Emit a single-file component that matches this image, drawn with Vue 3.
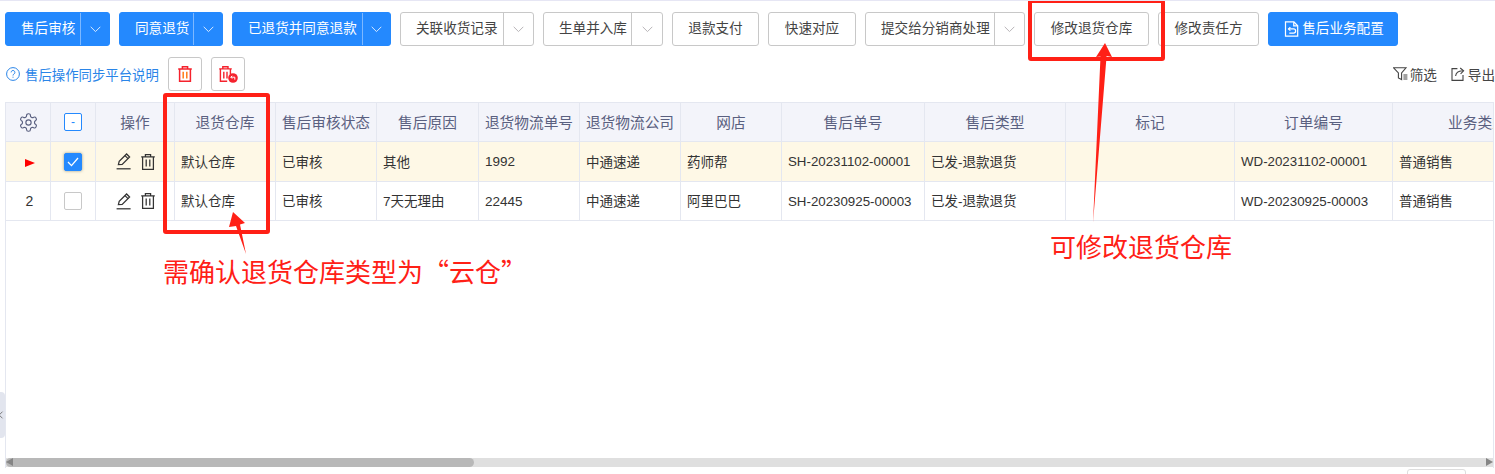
<script setup>
const buttons = [
  { label: '售后审核', w: 105, arrow: 28, primary: true },
  { label: '同意退货', w: 104, arrow: 28, primary: true },
  { label: '已退货并同意退款', w: 159, arrow: 27, primary: true },
  { label: '关联收货记录', w: 134, arrow: 29 },
  { label: '生单并入库', w: 120, arrow: 30 },
  { label: '退款支付', w: 87 },
  { label: '快速对应', w: 88 },
  { label: '提交给分销商处理', w: 160, arrow: 29 },
  { label: '修改退货仓库', w: 115 },
  { label: '修改责任方', w: 101 },
  { label: '售后业务配置', w: 130, primary: true, icon: true }
]
const cols = [
  { w: 45, t: '' }, { w: 45, t: '' }, { w: 79, t: '操作' },
  { w: 101, t: '退货仓库' }, { w: 101, t: '售后审核状态' }, { w: 102, t: '售后原因' },
  { w: 101, t: '退货物流单号' }, { w: 101, t: '退货物流公司' }, { w: 101, t: '网店' },
  { w: 143, t: '售后单号' }, { w: 141, t: '售后类型' }, { w: 169, t: '标记' },
  { w: 158, t: '订单编号' }, { w: 170, t: '业务类型' }
]
const rows = [
  { current: true, no: '', checked: true, cells: ['默认仓库', '已审核', '其他', '1992', '中通速递', '药师帮', 'SH-20231102-00001', '已发-退款退货', '', 'WD-20231102-00001', '普通销售'] },
  { current: false, no: '2', checked: false, cells: ['默认仓库', '已审核', '7天无理由', '22445', '中通速递', '阿里巴巴', 'SH-20230925-00003', '已发-退款退货', '', 'WD-20230925-00003', '普通销售'] }
]
const latinCols = [3, 6, 9]
const totalWidth = cols.reduce((s, c) => s + c.w, 0)
</script>

<template>
  <div class="page">
    <div class="toolbar">
      <div
        v-for="b in buttons"
        :key="b.label"
        class="btn"
        :class="{ primary: b.primary }"
        :style="{ width: b.w + 'px' }"
      >
        <span class="btn-main" :class="{ split: b.arrow, plain: !b.arrow }">
          <svg v-if="b.icon" class="cfg-icon" viewBox="0 0 16 17" fill="none" stroke="#fff" stroke-width="1.3">
            <path d="M1.6 1h9l4 4v11H1.6z" />
            <path d="M10.4 1.2v4h4" />
            <path d="M4.8 8.4h5.4a2.2 2.2 0 0 1 0 4.4H5.6" />
            <path d="M6.8 6.6 4.8 8.4l2 1.8" />
          </svg>
          {{ b.label }}
        </span>
        <span v-if="b.arrow" class="btn-arrow" :style="{ width: b.arrow + 'px' }">
          <svg width="11" height="7" viewBox="0 0 11 7" fill="none" stroke="currentColor" stroke-width="1">
            <path d="M.7.8 5.5 5.6 10.3.8" />
          </svg>
        </span>
      </div>
    </div>

    <div class="subbar">
      <div class="help">
        <svg class="help-icon" width="14" height="14" viewBox="0 0 14 14" fill="none" stroke="#2a85e8" stroke-width="1">
          <circle cx="7" cy="7" r="6.4" />
          <path d="M5.1 5.4a1.9 1.9 0 1 1 2.9 1.6c-.7.4-1 .8-1 1.5" />
          <path d="M7 9.7v1" />
        </svg>
        <span>售后操作同步平台说明</span>
      </div>
      <div class="icon-btn">
        <svg width="14" height="16" viewBox="0 0 14 16" fill="none" stroke="#f5222d" stroke-width="1.5">
          <path d="M.2 2.9h13.6M4.4 2.8V.8h5.2v2" />
          <path d="M1.6 3v12.2h10.8V3" />
          <path d="M5.2 5.8v6.8M8.8 5.8v6.8" stroke="#ff7a1a" />
        </svg>
      </div>
      <div class="icon-btn">
        <svg width="19" height="17" viewBox="0 0 19 17" fill="none" stroke="#f5222d" stroke-width="1.4">
          <path d="M.2 2.9h12.6M3.8 2.8V.8h5.2v2" />
          <path d="M1.4 3v12.2h6.8M11.4 3v5" />
          <path d="M4.8 5.8v6.8M8 5.8v6.8" />
          <circle cx="14" cy="12" r="4.8" fill="#f5222d" stroke="none" />
          <path d="M11.8 11.2h4v2.4M13.2 9.8l-1.4 1.4 1.4 1.4" stroke="#fff" stroke-width="1" />
        </svg>
      </div>
      <div class="tools">
        <span class="tool">
          <svg class="tool-icon" width="15" height="14" viewBox="0 0 15 14" fill="none" stroke="#444" stroke-width="1.1">
            <path d="M.6.8h12.4L8.6 6v6.6L5.4 11V6z" />
            <path d="M10.4 8h4M10.4 10h4M10.4 12h4" />
          </svg>
          筛选
        </span>
        <span class="tool">
          <svg class="tool-icon" width="15" height="14" viewBox="0 0 15 14" fill="none" stroke="#444" stroke-width="1.1">
            <path d="M6.4 1.6H1v11.8h11V8" />
            <path d="M4.6 9c.4-3 2.6-5 6.8-5.2M9.2 1l3.4 2.8-3 3" />
          </svg>
          导出
        </span>
      </div>
    </div>

    <div class="grid-wrap">
      <div class="grid-body">
        <table class="grid" :style="{ width: totalWidth + 'px' }">
          <colgroup>
            <col v-for="(c, i) in cols" :key="i" :style="{ width: c.w + 'px' }" />
          </colgroup>
          <thead>
            <tr>
              <th v-for="(c, i) in cols" :key="i" :class="{ label: i > 1 }">
                <svg v-if="i === 0" class="gear" width="21" height="21" viewBox="0 0 24 24" fill="none" stroke="#5a6080" stroke-width="1.3" stroke-linejoin="round">
                  <path d="M12.22 2h-.44a2 2 0 0 0-2 2v.18a2 2 0 0 1-1 1.73l-.43.25a2 2 0 0 1-2 0l-.15-.08a2 2 0 0 0-2.73.73l-.22.38a2 2 0 0 0 .73 2.73l.15.1a2 2 0 0 1 1 1.72v.51a2 2 0 0 1-1 1.74l-.15.09a2 2 0 0 0-.73 2.73l.22.38a2 2 0 0 0 2.73.73l.15-.08a2 2 0 0 1 2 0l.43.25a2 2 0 0 1 1 1.73V20a2 2 0 0 0 2 2h.44a2 2 0 0 0 2-2v-.18a2 2 0 0 1 1-1.73l.43-.25a2 2 0 0 1 2 0l.15.08a2 2 0 0 0 2.73-.73l.22-.39a2 2 0 0 0-.73-2.73l-.15-.08a2 2 0 0 1-1-1.74v-.5a2 2 0 0 1 1-1.74l.15-.09a2 2 0 0 0 .73-2.73l-.22-.38a2 2 0 0 0-2.73-.73l-.15.08a2 2 0 0 1-2 0l-.43-.25a2 2 0 0 1-1-1.73V4a2 2 0 0 0-2-2z" />
                  <circle cx="12" cy="12" r="3" />
                </svg>
                <span v-else-if="i === 1" class="check minus">-</span>
                <template v-else>{{ c.t }}</template>
              </th>
            </tr>
          </thead>
          <tbody>
            <tr v-for="(r, ri) in rows" :key="ri" :class="{ current: r.current, second: !r.current }">
              <td class="center first">
                <span v-if="r.current" class="pointer"></span>
                <template v-else>{{ r.no }}</template>
              </td>
              <td class="center">
                <span v-if="r.checked" class="check on">
                  <svg width="12" height="10" viewBox="0 0 12 10" fill="none" stroke="#fff" stroke-width="1.3">
                    <path d="M1 5l3.5 3.6L11 1" />
                  </svg>
                </span>
                <span v-else class="check"></span>
              </td>
              <td class="center">
                <span class="ops">
                  <svg width="16" height="17" viewBox="0 0 16 17" fill="none" stroke="#333" stroke-width="1.25">
                    <path d="M2.4 11.6 3.2 8.4 10.6 1l3 3-7.4 7.4z" />
                    <path d="M9 2.6l3 3" />
                    <path d="M.6 15.8h14" />
                  </svg>
                  <svg width="14" height="16" viewBox="0 0 14 16" fill="none" stroke="#333" stroke-width="1.25">
                    <path d="M.2 2.8h13.6M4.4 2.6V.7h5.2v1.9" />
                    <path d="M1.6 3v12.3h10.8V3" />
                    <path d="M5.2 5.6v7M8.8 5.6v7" />
                  </svg>
                </span>
              </td>
              <td
                v-for="(c, ci) in r.cells"
                :key="ci"
                class="text"
                :class="{ latin: latinCols.includes(ci), code: ci === 6 || ci === 9 }"
              >{{ c }}</td>
            </tr>
          </tbody>
        </table>
      </div>
      <div class="hscroll">
        <div class="hthumb"></div>
        <span class="tri left"></span>
        <span class="tri right"></span>
      </div>
    </div>

    <div class="footer"><span class="footer-btn"></span></div>

    <div class="collapse-tab">
      <svg width="6" height="10" viewBox="0 0 6 10" fill="none" stroke="#666" stroke-width="1">
        <path d="M3 1 -1 5 3 9" />
      </svg>
    </div>

    <div class="mark mark-a"></div>
    <div class="mark mark-b"></div>
    <svg class="arrows" width="1495" height="474" viewBox="0 0 1495 474">
      <polygon fill="#ff2016" points="233,212 245,223 240,224.5 246,254 236,226 229,227" />
      <polygon fill="#ff2016" points="1105,43 1112,57 1106.6,56 1093,223 1100.5,56.5 1096,57" />
    </svg>
    <div class="note note-a">需确认退货仓库类型为“云仓”</div>
    <div class="note note-b">可修改退货仓库</div>
  </div>
</template>

<style>
html, body { margin: 0; background: #fff; }
</style>

<style scoped>
.page {
  position: relative;
  width: 1495px;
  height: 474px;
  overflow: hidden;
  box-sizing: border-box;
  border-top: 1px solid #e6e6f4;
  background: #fff;
  font-family: "Liberation Sans", "Noto Sans CJK SC", sans-serif;
  font-size: 13.6px;
  color: #333;
}
.toolbar {
  display: flex;
  gap: 9px;
  padding: 11px 0 0 5px;
}
.btn {
  box-sizing: border-box;
  display: flex;
  height: 34px;
  border: 1px solid #c8c8c8;
  border-radius: 3px;
  background: #fff;
  color: #444;
  line-height: 32px;
  white-space: nowrap;
}
.btn.primary {
  border-color: #2489fe;
  background: #2489fe;
  color: #fff;
}
.btn-main { flex: 1; display: flex; align-items: center; }
.btn-main.split { padding: 0 3px 0 15px; border-right: 1px solid #c8c8c8; }
.btn.primary .btn-main.split { border-right-color: #7db8ff; }
.btn-main.plain { justify-content: center; }
.btn-arrow {
  display: flex;
  flex: none;
  align-items: center;
  justify-content: center;
  box-sizing: border-box;
  color: #b8b4b8;
}
.btn.primary .btn-arrow { color: #d8e9ff; }
.cfg-icon { width: 15px; height: 16px; margin: 0 3px 0 2px; }
.subbar {
  display: flex;
  align-items: center;
  gap: 9px;
  height: 34px;
  margin-top: 11px;
  padding-left: 6px;
}
.help {
  display: flex;
  align-items: center;
  gap: 5px;
  width: 153px;
  color: #2a85e8;
  font-size: 13.4px;
  white-space: nowrap;
}
.help-icon, .tool-icon { flex: none; }
.icon-btn {
  box-sizing: border-box;
  display: flex;
  align-items: center;
  justify-content: center;
  width: 34px;
  height: 34px;
  border: 1px solid #c8c8c8;
  border-radius: 3px;
}
.tools {
  display: flex;
  gap: 14px;
  margin-left: auto;
  white-space: nowrap;
  color: #444;
}
.tool { display: flex; align-items: center; gap: 2px; }
.grid-wrap {
  box-sizing: border-box;
  display: flex;
  flex-direction: column;
  width: 1489px;
  height: 366px;
  margin: 11px 0 0 5px;
  border: 1px solid #e4e7f0;
  border-bottom: 0;
  overflow: hidden;
}
.grid-body { flex: 1; overflow: hidden; }
.grid {
  table-layout: fixed;
  border-collapse: separate;
  border-spacing: 0;
}
.grid th, .grid td {
  box-sizing: border-box;
  padding: 0;
  border-right: 1px solid #e4e7f0;
  border-bottom: 1px solid #e4e7f0;
  white-space: nowrap;
  overflow: hidden;
}
.grid th {
  height: 39px;
  background: #f3f4fa;
  color: #5a6080;
  font-size: 14.7px;
  font-weight: 400;
  text-align: center;
}
.grid th.label { padding-bottom: 2px; }
.grid td {
  height: 40px;
  font-size: 13.5px;
  color: #333;
}
.grid td.text { padding: 0 0 2px 6px; }
.grid td.latin { padding-bottom: 0; }
.grid tr.second td { height: 39px; }
.grid td.center { text-align: center; font-size: 14px; }
.grid td.first { padding-left: 3px; }
.grid td.code { font-size: 13.3px; }
.grid tr.current td { background: #fef8e6; }
.gear { display: block; margin: 0 auto; }
.check {
  box-sizing: border-box;
  display: inline-flex;
  align-items: center;
  justify-content: center;
  width: 18px;
  height: 18px;
  border: 1px solid #c8c8c8;
  border-radius: 2px;
  background: #fff;
  vertical-align: middle;
}
.check.minus { border-color: #2489fe; color: #2489fe; font-size: 12px; line-height: 14px; }
.check.on {
  border-color: #2489fe;
  background: #2489fe;
  box-shadow: 0 0 3px rgba(90, 90, 60, 0.6);
}
.pointer {
  display: inline-block;
  border-left: 10px solid #f00;
  border-top: 4.5px solid transparent;
  border-bottom: 4.5px solid transparent;
  vertical-align: middle;
}
.ops { display: inline-flex; align-items: center; gap: 9px; vertical-align: middle; }
.hscroll {
  position: relative;
  flex: none;
  height: 9px;
  margin-bottom: 1px;
  background: #dfdfdf;
}
.hthumb {
  width: 468px;
  height: 100%;
  border-radius: 5px;
  background: #b8b8b8;
}
.tri {
  position: absolute;
  top: 0;
  border-top: 4.5px solid transparent;
  border-bottom: 4.5px solid transparent;
}
.tri.left { left: 0; border-right: 7px solid #858585; }
.tri.right { right: 0; border-left: 7px solid #858585; }
.footer { display: flex; justify-content: flex-end; padding: 1px 29px 0 0; }
.footer-btn {
  box-sizing: border-box;
  width: 59px;
  height: 20px;
  border: 1px solid #ddd;
  border-radius: 3px;
}
.collapse-tab {
  position: absolute;
  left: 0;
  top: 391px;
  display: flex;
  align-items: center;
  width: 5px;
  height: 46px;
  border-radius: 0 4px 4px 0;
  background: #e2e5ee;
}
.mark {
  position: absolute;
  box-sizing: border-box;
  border: 4px solid #ff2016;
  border-radius: 3px;
}
.mark-a { left: 163px; top: 92px; width: 107px; height: 141px; }
.mark-b { left: 1028px; top: -2px; width: 137px; height: 62px; }
.arrows { position: absolute; left: 0; top: -1px; pointer-events: none; }
.note {
  position: absolute;
  font-family: "Noto Sans CJK SC", sans-serif;
  font-size: 26px;
  line-height: 34px;
  color: #ff2016;
  white-space: nowrap;
}
.note-a { left: 163px; top: 253px; }
.note-b { left: 1050px; top: 228px; }
</style>
